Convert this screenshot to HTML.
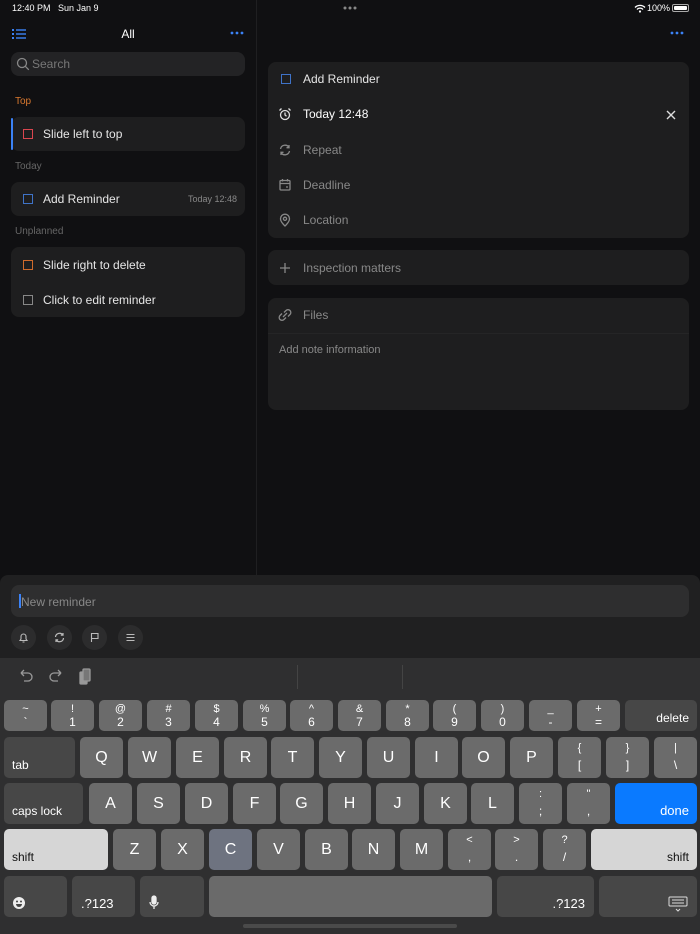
<!DOCTYPE html>
<html><head><meta charset="utf-8"><style>
*{margin:0;padding:0;box-sizing:border-box}
body{width:700px;height:934px;background:#101012;position:relative;overflow:hidden;font-family:"Liberation Sans",sans-serif;color:#e6e6e6}
.a{position:absolute}
.card{position:absolute;background:#1e1e1f;border-radius:8px}
.cb{position:absolute;width:10px;height:10px;border:1.5px solid}
.k{position:absolute;background:#6b6b6b;border-radius:5px;color:#fff;text-align:center;font-size:16px;height:31px}
.r{height:41px;line-height:41px}
.k .u{position:absolute;left:0;right:0;top:3px;font-size:11px;line-height:12px}
.k .l{position:absolute;left:0;right:0;top:16px;font-size:12px;line-height:13px}
.d{background:#474747}
.w{background:#d6d6d6;color:#111}
.lbl{position:absolute;font-size:12px;line-height:14px;bottom:6px}
</style></head><body>
<div class="a" style="left:12px;top:3px;font-size:9px;color:#fff">12:40 PM&nbsp;&nbsp; Sun Jan 9</div>
<svg class="a" style="left:343px;top:6px" width="14" height="4"><circle cx="2" cy="2" r="1.5" fill="#888"/><circle cx="7" cy="2" r="1.5" fill="#888"/><circle cx="12" cy="2" r="1.5" fill="#888"/></svg>
<svg class="a" style="left:634px;top:4px" width="12" height="9" viewBox="0 0 12 9"><path d="M1 3.5a7 7 0 0 1 10 0M3 5.5a4 4 0 0 1 6 0" stroke="#fff" stroke-width="1.3" fill="none"/><circle cx="6" cy="7.5" r="1.1" fill="#fff"/></svg>
<div class="a" style="left:647px;top:3px;font-size:9px;color:#fff">100%</div>
<div class="a" style="left:672px;top:4px;width:17px;height:8px;border:1px solid #aaa;border-radius:2px;padding:1px"><div style="background:#fff;width:100%;height:100%;border-radius:1px"></div></div>
<div class="a" style="left:256px;top:0;width:1px;height:575px;background:#1f1f21"></div>
<svg class="a" style="left:12px;top:28px" width="14" height="12" viewBox="0 0 14 12"><g fill="#3b82f6"><rect x="0" y="1" width="2" height="2"/><rect x="0" y="5" width="2" height="2"/><rect x="0" y="9" width="2" height="2"/><rect x="4" y="1.3" width="10" height="1.4"/><rect x="4" y="5.3" width="10" height="1.4"/><rect x="4" y="9.3" width="10" height="1.4"/></g></svg>
<div class="a" style="left:0;width:256px;top:27px;text-align:center;font-size:12px;color:#fff">All</div>
<svg class="a" style="left:230px;top:31px" width="14" height="4"><g fill="#3b82f6"><circle cx="2" cy="2" r="1.4"/><circle cx="7" cy="2" r="1.4"/><circle cx="12" cy="2" r="1.4"/></g></svg>
<div class="card" style="left:11px;top:52px;width:234px;height:24px;background:#232325"></div>
<svg class="a" style="left:16px;top:57px" width="14" height="14" viewBox="0 0 14 14"><circle cx="6" cy="6" r="4.5" stroke="#888" stroke-width="1.3" fill="none"/><path d="M9.3 9.3l3.5 3.5" stroke="#888" stroke-width="1.3"/></svg>
<div class="a" style="left:32px;top:57px;font-size:12px;color:#777">Search</div>
<div class="a" style="left:15px;top:96px;font-size:10px;color:#d9782f">Top</div>
<div class="card" style="left:11px;top:117px;width:234px;height:34px"></div>
<div class="a" style="left:11px;top:118px;width:2px;height:32px;background:#3b82f6;border-radius:1px"></div>
<div class="cb" style="left:23px;top:129px;border-color:#d9464f"></div>
<div class="a" style="left:43px;top:127px;font-size:12px">Slide left to top</div>
<div class="a" style="left:15px;top:161px;font-size:10px;color:#666">Today</div>
<div class="card" style="left:11px;top:182px;width:234px;height:34px"></div>
<div class="cb" style="left:23px;top:194px;border-color:#3f73c8"></div>
<div class="a" style="left:43px;top:192px;font-size:12px">Add Reminder</div>
<div class="a" style="left:188px;top:194px;font-size:9px;color:#888">Today 12:48</div>
<div class="a" style="left:15px;top:226px;font-size:10px;color:#666">Unplanned</div>
<div class="card" style="left:11px;top:247px;width:234px;height:70px"></div>
<div class="cb" style="left:23px;top:260px;border-color:#d06b2c"></div>
<div class="a" style="left:43px;top:258px;font-size:12px">Slide right to delete</div>
<div class="cb" style="left:23px;top:295px;border-color:#888"></div>
<div class="a" style="left:43px;top:293px;font-size:12px">Click to edit reminder</div>
<svg class="a" style="left:670px;top:31px" width="14" height="4"><g fill="#3b82f6"><circle cx="2" cy="2" r="1.4"/><circle cx="7" cy="2" r="1.4"/><circle cx="12" cy="2" r="1.4"/></g></svg>
<div class="card" style="left:268px;top:62px;width:421px;height:176px"></div>
<div class="cb" style="left:281px;top:74px;border-color:#3f73c8"></div>
<div class="a" style="left:303px;top:72px;font-size:12px">Add Reminder</div>
<svg class="a" style="left:278px;top:107px" width="14" height="14" viewBox="0 0 14 14" fill="none" stroke="#ddd" stroke-width="1.3"><circle cx="7" cy="8" r="4.5"/><path d="M7 5.5V8l1.5 1.3M1.5 3.5L3.5 1.5M12.5 3.5L10.5 1.5"/></svg>
<div class="a" style="left:303px;top:107px;font-size:12px;color:#fff">Today 12:48</div>
<svg class="a" style="left:666px;top:110px" width="10" height="10" viewBox="0 0 10 10"><path d="M1 1l8 8M9 1L1 9" stroke="#ddd" stroke-width="1.4"/></svg>
<svg class="a" style="left:278px;top:143px" width="14" height="14" viewBox="0 0 14 14" fill="none" stroke="#888" stroke-width="1.3"><path d="M2.5 6A4.6 4.6 0 0 1 11 4.5M11.5 8A4.6 4.6 0 0 1 3 9.5M11 2v2.7H8.5M3 12V9.3h2.5"/></svg>
<div class="a" style="left:303px;top:143px;font-size:12px;color:#888">Repeat</div>
<svg class="a" style="left:278px;top:178px" width="14" height="14" viewBox="0 0 14 14" fill="none" stroke="#888" stroke-width="1.3"><rect x="2" y="2.5" width="10" height="9.5" rx="1"/><path d="M2 5.5h10M4.5 1v2.5M9.5 1v2.5M8 9h2"/></svg>
<div class="a" style="left:303px;top:178px;font-size:12px;color:#888">Deadline</div>
<svg class="a" style="left:278px;top:213px" width="14" height="14" viewBox="0 0 14 14" fill="none" stroke="#888" stroke-width="1.3"><path d="M7 13s4.5-4 4.5-7.3A4.5 4.5 0 0 0 2.5 5.7C2.5 9 7 13 7 13z"/><circle cx="7" cy="5.8" r="1.6"/></svg>
<div class="a" style="left:303px;top:213px;font-size:12px;color:#888">Location</div>
<div class="card" style="left:268px;top:250px;width:421px;height:35px"></div>
<svg class="a" style="left:279px;top:262px" width="12" height="12" viewBox="0 0 12 12"><path d="M6 1v10M1 6h10" stroke="#888" stroke-width="1.3"/></svg>
<div class="a" style="left:303px;top:261px;font-size:12px;color:#888">Inspection matters</div>
<div class="card" style="left:268px;top:298px;width:421px;height:112px"></div>
<div class="a" style="left:268px;top:333px;width:421px;height:1px;background:#252526"></div>
<svg class="a" style="left:278px;top:308px" width="14" height="14" viewBox="0 0 14 14" fill="none" stroke="#888" stroke-width="1.3"><path d="M6 4.5l2-2a2.8 2.8 0 0 1 4 4l-2 2M8 9.5l-2 2a2.8 2.8 0 0 1-4-4l2-2M5 9l4-4"/></svg>
<div class="a" style="left:303px;top:308px;font-size:12px;color:#888">Files</div>
<div class="a" style="left:279px;top:344px;font-size:11px;color:#888">Add note information</div>
<div class="a" style="left:0;top:575px;width:700px;height:90px;background:#202021;border-radius:8px 8px 0 0"></div>
<div class="card" style="left:11px;top:585px;width:678px;height:32px;background:#2e2e2f"></div>
<div class="a" style="left:19px;top:594px;width:2px;height:14px;background:#3b82f6"></div>
<div class="a" style="left:21px;top:595px;font-size:12px;color:#888">New reminder</div>
<div class="a" style="left:11px;top:625px;width:25px;height:25px;border-radius:50%;background:#2c2c2d"></div>
<div class="a" style="left:47px;top:625px;width:25px;height:25px;border-radius:50%;background:#2c2c2d"></div>
<div class="a" style="left:82px;top:625px;width:25px;height:25px;border-radius:50%;background:#2c2c2d"></div>
<div class="a" style="left:118px;top:625px;width:25px;height:25px;border-radius:50%;background:#2c2c2d"></div>
<svg class="a" style="left:18px;top:632px" width="11" height="11" viewBox="0 0 11 11" fill="none" stroke="#bbb" stroke-width="1.1"><path d="M2 8.5h7L8 7V4.5a2.5 2.5 0 0 0-5 0V7zM4.5 10h2"/></svg>
<svg class="a" style="left:54px;top:632px" width="11" height="11" viewBox="0 0 11 11" fill="none" stroke="#bbb" stroke-width="1.2"><path d="M1.5 5A4 4 0 0 1 8.8 3M9.5 6A4 4 0 0 1 2.2 8M9 1v2.2H6.8M2 10V7.8h2.2"/></svg>
<svg class="a" style="left:89px;top:632px" width="11" height="11" viewBox="0 0 11 11" fill="none" stroke="#bbb" stroke-width="1.1"><path d="M2.5 10V1.5h6.5v5H2.5"/></svg>
<svg class="a" style="left:125px;top:632px" width="11" height="11" viewBox="0 0 11 11" stroke="#bbb" stroke-width="1.1"><path d="M1.5 2.5h8M1.5 5.5h8M1.5 8.5h8"/></svg>
<div class="a" style="left:0;top:658px;width:700px;height:276px;background:#2f2f30"></div>
<div class="a" style="left:297px;top:665px;width:1px;height:24px;background:#444"></div>
<div class="a" style="left:402px;top:665px;width:1px;height:24px;background:#444"></div>
<svg class="a" style="left:16px;top:668px" width="80" height="18" viewBox="0 0 80 18" fill="none" stroke="#999" stroke-width="1.3"><path d="M5 5h7a4 4 0 0 1 0 8H8M5 5l3-3M5 5l3 3"/><path d="M45 5h-7a4 4 0 0 0 0 8h4M45 5l-3-3M45 5l-3 3"/><rect x="64" y="4" width="7" height="12" rx="1" fill="#999"/><rect x="67" y="1" width="7" height="12" rx="1" fill="#777"/></svg>
<div class="k" style="left:4px;top:700px;width:43px"><span class="u">~</span><span class="l">`</span></div>
<div class="k" style="left:51px;top:700px;width:43px"><span class="u">!</span><span class="l">1</span></div>
<div class="k" style="left:99px;top:700px;width:43px"><span class="u">@</span><span class="l">2</span></div>
<div class="k" style="left:147px;top:700px;width:43px"><span class="u">#</span><span class="l">3</span></div>
<div class="k" style="left:195px;top:700px;width:43px"><span class="u">$</span><span class="l">4</span></div>
<div class="k" style="left:243px;top:700px;width:43px"><span class="u">%</span><span class="l">5</span></div>
<div class="k" style="left:290px;top:700px;width:43px"><span class="u">^</span><span class="l">6</span></div>
<div class="k" style="left:338px;top:700px;width:43px"><span class="u">&amp;</span><span class="l">7</span></div>
<div class="k" style="left:386px;top:700px;width:43px"><span class="u">*</span><span class="l">8</span></div>
<div class="k" style="left:433px;top:700px;width:43px"><span class="u">(</span><span class="l">9</span></div>
<div class="k" style="left:481px;top:700px;width:43px"><span class="u">)</span><span class="l">0</span></div>
<div class="k" style="left:529px;top:700px;width:43px"><span class="u">_</span><span class="l">-</span></div>
<div class="k" style="left:577px;top:700px;width:43px"><span class="u">+</span><span class="l">=</span></div>
<div class="k d" style="left:625px;top:700px;width:72px"><span class="lbl" style="right:8px">delete</span></div>
<div class="k d r" style="left:4px;top:737px;width:71px"><span class="lbl" style="left:8px">tab</span></div>
<div class="k r" style="left:80px;top:737px;width:43px">Q</div>
<div class="k r" style="left:128px;top:737px;width:43px">W</div>
<div class="k r" style="left:176px;top:737px;width:43px">E</div>
<div class="k r" style="left:224px;top:737px;width:43px">R</div>
<div class="k r" style="left:271px;top:737px;width:43px">T</div>
<div class="k r" style="left:319px;top:737px;width:43px">Y</div>
<div class="k r" style="left:367px;top:737px;width:43px">U</div>
<div class="k r" style="left:415px;top:737px;width:43px">I</div>
<div class="k r" style="left:462px;top:737px;width:43px">O</div>
<div class="k r" style="left:510px;top:737px;width:43px">P</div>
<div class="k r" style="left:558px;top:737px;width:43px"><span class="u" style="top:5px">{</span><span class="l" style="top:22px">[</span></div>
<div class="k r" style="left:606px;top:737px;width:43px"><span class="u" style="top:5px">}</span><span class="l" style="top:22px">]</span></div>
<div class="k r" style="left:654px;top:737px;width:43px"><span class="u" style="top:5px">|</span><span class="l" style="top:22px">\</span></div>
<div class="k d r" style="left:4px;top:783px;width:79px"><span class="lbl" style="left:8px">caps lock</span></div>
<div class="k r" style="left:89px;top:783px;width:43px">A</div>
<div class="k r" style="left:137px;top:783px;width:43px">S</div>
<div class="k r" style="left:185px;top:783px;width:43px">D</div>
<div class="k r" style="left:233px;top:783px;width:43px">F</div>
<div class="k r" style="left:280px;top:783px;width:43px">G</div>
<div class="k r" style="left:328px;top:783px;width:43px">H</div>
<div class="k r" style="left:376px;top:783px;width:43px">J</div>
<div class="k r" style="left:424px;top:783px;width:43px">K</div>
<div class="k r" style="left:471px;top:783px;width:43px">L</div>
<div class="k r" style="left:519px;top:783px;width:43px"><span class="u" style="top:5px">:</span><span class="l" style="top:22px">;</span></div>
<div class="k r" style="left:567px;top:783px;width:43px"><span class="u" style="top:5px">"</span><span class="l" style="top:22px">,</span></div>
<div class="k r" style="left:615px;top:783px;width:82px;background:#0a7aff"><span class="lbl" style="right:8px;font-size:13px">done</span></div>
<div class="k w r" style="left:4px;top:829px;width:104px"><span class="lbl" style="left:8px">shift</span></div>
<div class="k r" style="left:113px;top:829px;width:43px">Z</div>
<div class="k r" style="left:161px;top:829px;width:43px">X</div>
<div class="k r" style="left:209px;top:829px;width:43px;background:#6e7380">C</div>
<div class="k r" style="left:257px;top:829px;width:43px">V</div>
<div class="k r" style="left:305px;top:829px;width:43px">B</div>
<div class="k r" style="left:352px;top:829px;width:43px">N</div>
<div class="k r" style="left:400px;top:829px;width:43px">M</div>
<div class="k r" style="left:448px;top:829px;width:43px"><span class="u" style="top:5px">&lt;</span><span class="l" style="top:22px">,</span></div>
<div class="k r" style="left:495px;top:829px;width:43px"><span class="u" style="top:5px">&gt;</span><span class="l" style="top:22px">.</span></div>
<div class="k r" style="left:543px;top:829px;width:43px"><span class="u" style="top:5px">?</span><span class="l" style="top:22px">/</span></div>
<div class="k w r" style="left:591px;top:829px;width:106px"><span class="lbl" style="right:8px">shift</span></div>
<div class="k d r" style="left:4px;top:876px;width:63px"><svg class="a" style="left:9px;top:21px" width="12" height="12" viewBox="0 0 12 12"><circle cx="6" cy="6" r="6" fill="#eee"/><circle cx="4" cy="4.5" r="1" fill="#444"/><circle cx="8" cy="4.5" r="1" fill="#444"/><path d="M3 7h6a3 3 0 0 1-6 0z" fill="#444"/></svg></div>
<div class="k d r" style="left:72px;top:876px;width:63px"><span class="lbl" style="left:9px;font-size:13px">.?123</span></div>
<div class="k d r" style="left:140px;top:876px;width:64px"><svg class="a" style="left:9px;top:19px" width="10" height="16" viewBox="0 0 10 16" fill="none" stroke="#eee" stroke-width="1.3"><rect x="3" y="1" width="4" height="8" rx="2" fill="#eee"/><path d="M1 7a4 4 0 0 0 8 0M5 11v3"/></svg></div>
<div class="k r" style="left:209px;top:876px;width:283px;background:#6a6a6a"></div>
<div class="k d r" style="left:497px;top:876px;width:97px"><span class="lbl" style="right:9px;font-size:13px">.?123</span></div>
<div class="k d r" style="left:599px;top:876px;width:98px"><svg class="a" style="right:9px;top:20px" width="20" height="16" viewBox="0 0 20 16" fill="none" stroke="#ddd" stroke-width="1"><rect x="1" y="1" width="18" height="9" rx="1"/><path d="M4 4h12M4 7h12M8 13l2 2 2-2"/></svg></div>
<div class="a" style="left:243px;top:924px;width:214px;height:4px;border-radius:2px;background:#4a4a4a"></div>
</body></html>
